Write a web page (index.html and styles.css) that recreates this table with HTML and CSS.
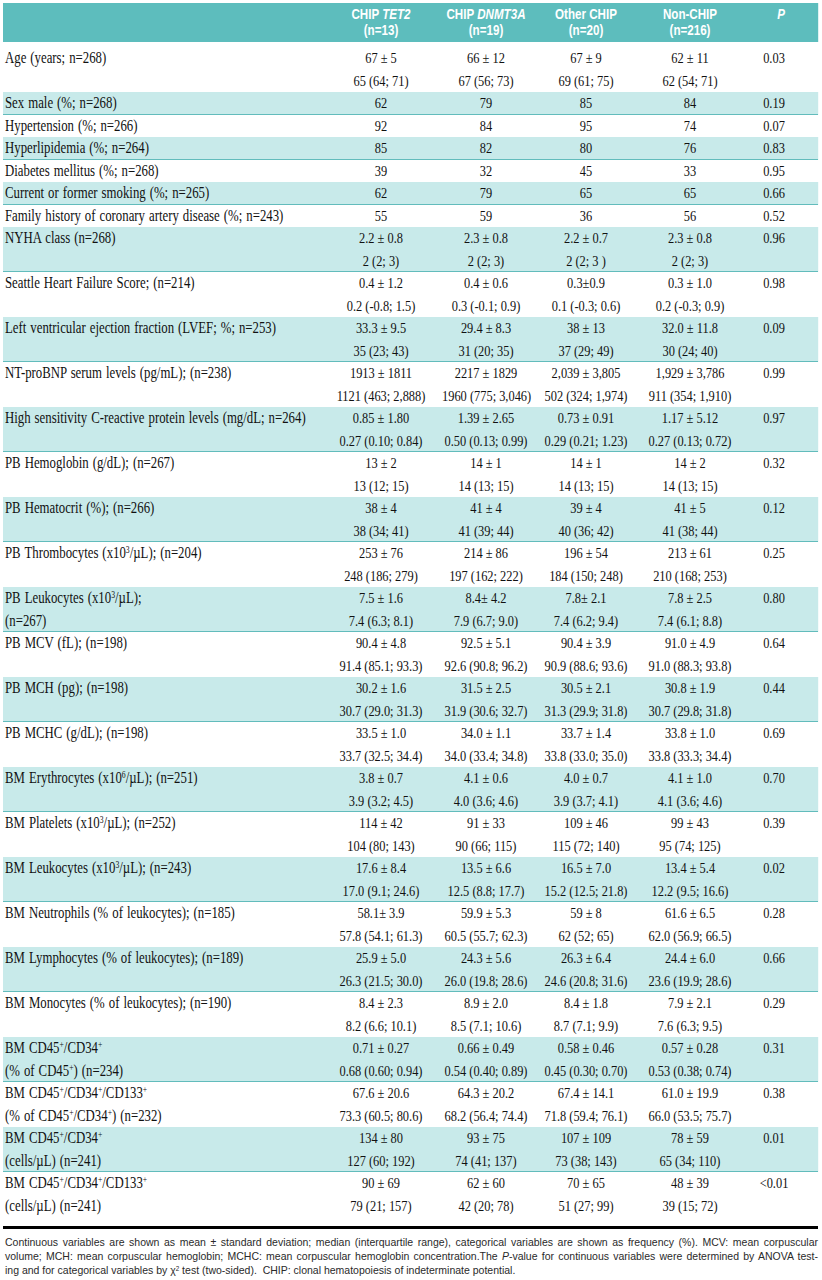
FILE: index.html
```html
<!DOCTYPE html>
<html lang="en">
<head>
<meta charset="utf-8">
<title>Patient characteristics by CHIP status</title>
<link rel="stylesheet" href="styles.css">
</head>
<body>
<div class="page">
  <div class="table">
    <div class="thead">
      <div class="h-label"></div>
      <div class="h">CHIP <i>TET2</i><br>(n=13)</div>
      <div class="h">CHIP <i>DNMT3A</i><br>(n=19)</div>
      <div class="h">Other CHIP<br>(n=20)</div>
      <div class="h">Non-CHIP<br>(n=216)</div>
      <div class="h h-p"><i>P</i></div>
    </div>
    <div class="tbody">
      <div class="row"><div class="lbl">Age (years; n=268)</div><div class="v">67 ± 5<br>65 (64; 71)</div><div class="v">66 ± 12<br>67 (56; 73)</div><div class="v">67 ± 9<br>69 (61; 75)</div><div class="v">62 ± 11<br>62 (54; 71)</div><div class="v p">0.03</div></div>
      <div class="row"><div class="lbl">Sex male (%; n=268)</div><div class="v">62</div><div class="v">79</div><div class="v">85</div><div class="v">84</div><div class="v p">0.19</div></div>
      <div class="row"><div class="lbl">Hypertension (%; n=266)</div><div class="v">92</div><div class="v">84</div><div class="v">95</div><div class="v">74</div><div class="v p">0.07</div></div>
      <div class="row"><div class="lbl">Hyperlipidemia (%; n=264)</div><div class="v">85</div><div class="v">82</div><div class="v">80</div><div class="v">76</div><div class="v p">0.83</div></div>
      <div class="row"><div class="lbl">Diabetes mellitus (%; n=268)</div><div class="v">39</div><div class="v">32</div><div class="v">45</div><div class="v">33</div><div class="v p">0.95</div></div>
      <div class="row"><div class="lbl">Current or former smoking (%; n=265)</div><div class="v">62</div><div class="v">79</div><div class="v">65</div><div class="v">65</div><div class="v p">0.66</div></div>
      <div class="row"><div class="lbl">Family history of coronary artery disease (%; n=243)</div><div class="v">55</div><div class="v">59</div><div class="v">36</div><div class="v">56</div><div class="v p">0.52</div></div>
      <div class="row"><div class="lbl">NYHA class (n=268)</div><div class="v">2.2 ± 0.8<br>2 (2; 3)</div><div class="v">2.3 ± 0.8<br>2 (2; 3)</div><div class="v">2.2 ± 0.7<br>2 (2; 3 )</div><div class="v">2.3 ± 0.8<br>2 (2; 3)</div><div class="v p">0.96</div></div>
      <div class="row"><div class="lbl">Seattle Heart Failure Score; (n=214)</div><div class="v">0.4 ± 1.2<br>0.2 (-0.8; 1.5)</div><div class="v">0.4 ± 0.6<br>0.3 (-0.1; 0.9)</div><div class="v">0.3±0.9<br>0.1 (-0.3; 0.6)</div><div class="v">0.3 ± 1.0<br>0.2 (-0.3; 0.9)</div><div class="v p">0.98</div></div>
      <div class="row"><div class="lbl">Left ventricular ejection fraction (LVEF; %; n=253)</div><div class="v">33.3 ± 9.5<br>35 (23; 43)</div><div class="v">29.4 ± 8.3<br>31 (20; 35)</div><div class="v">38 ± 13<br>37 (29; 49)</div><div class="v">32.0 ± 11.8<br>30 (24; 40)</div><div class="v p">0.09</div></div>
      <div class="row"><div class="lbl">NT-proBNP serum levels (pg/mL); (n=238)</div><div class="v">1913 ± 1811<br>1121 (463; 2,888)</div><div class="v">2217 ± 1829<br>1960 (775; 3,046)</div><div class="v">2,039 ± 3,805<br>502 (324; 1,974)</div><div class="v">1,929 ± 3,786<br>911 (354; 1,910)</div><div class="v p">0.99</div></div>
      <div class="row"><div class="lbl">High sensitivity C-reactive protein levels (mg/dL; n=264)</div><div class="v">0.85 ± 1.80<br>0.27 (0.10; 0.84)</div><div class="v">1.39 ± 2.65<br>0.50 (0.13; 0.99)</div><div class="v">0.73 ± 0.91<br>0.29 (0.21; 1.23)</div><div class="v">1.17 ± 5.12<br>0.27 (0.13; 0.72)</div><div class="v p">0.97</div></div>
      <div class="row"><div class="lbl">PB Hemoglobin (g/dL); (n=267)</div><div class="v">13 ± 2<br>13 (12; 15)</div><div class="v">14 ± 1<br>14 (13; 15)</div><div class="v">14 ± 1<br>14 (13; 15)</div><div class="v">14 ± 2<br>14 (13; 15)</div><div class="v p">0.32</div></div>
      <div class="row"><div class="lbl">PB Hematocrit (%); (n=266)</div><div class="v">38 ± 4<br>38 (34; 41)</div><div class="v">41 ± 4<br>41 (39; 44)</div><div class="v">39 ± 4<br>40 (36; 42)</div><div class="v">41 ± 5<br>41 (38; 44)</div><div class="v p">0.12</div></div>
      <div class="row"><div class="lbl">PB Thrombocytes (x10<sup>3</sup>/µL); (n=204)</div><div class="v">253 ± 76<br>248 (186; 279)</div><div class="v">214 ± 86<br>197 (162; 222)</div><div class="v">196 ± 54<br>184 (150; 248)</div><div class="v">213 ± 61<br>210 (168; 253)</div><div class="v p">0.25</div></div>
      <div class="row"><div class="lbl">PB Leukocytes (x10<sup>3</sup>/µL);<br>(n=267)</div><div class="v">7.5 ± 1.6<br>7.4 (6.3; 8.1)</div><div class="v">8.4± 4.2<br>7.9 (6.7; 9.0)</div><div class="v">7.8± 2.1<br>7.4 (6.2; 9.4)</div><div class="v">7.8 ± 2.5<br>7.4 (6.1; 8.8)</div><div class="v p">0.80</div></div>
      <div class="row"><div class="lbl">PB MCV (fL); (n=198)</div><div class="v">90.4 ± 4.8<br>91.4 (85.1; 93.3)</div><div class="v">92.5 ± 5.1<br>92.6 (90.8; 96.2)</div><div class="v">90.4 ± 3.9<br>90.9 (88.6; 93.6)</div><div class="v">91.0 ± 4.9<br>91.0 (88.3; 93.8)</div><div class="v p">0.64</div></div>
      <div class="row"><div class="lbl">PB MCH (pg); (n=198)</div><div class="v">30.2 ± 1.6<br>30.7 (29.0; 31.3)</div><div class="v">31.5 ± 2.5<br>31.9 (30.6; 32.7)</div><div class="v">30.5 ± 2.1<br>31.3 (29.9; 31.8)</div><div class="v">30.8 ± 1.9<br>30.7 (29.8; 31.8)</div><div class="v p">0.44</div></div>
      <div class="row"><div class="lbl">PB MCHC (g/dL); (n=198)</div><div class="v">33.5 ± 1.0<br>33.7 (32.5; 34.4)</div><div class="v">34.0 ± 1.1<br>34.0 (33.4; 34.8)</div><div class="v">33.7 ± 1.4<br>33.8 (33.0; 35.0)</div><div class="v">33.8 ± 1.0<br>33.8 (33.3; 34.4)</div><div class="v p">0.69</div></div>
      <div class="row"><div class="lbl">BM Erythrocytes (x10<sup>6</sup>/µL); (n=251)</div><div class="v">3.8 ± 0.7<br>3.9 (3.2; 4.5)</div><div class="v">4.1 ± 0.6<br>4.0 (3.6; 4.6)</div><div class="v">4.0 ± 0.7<br>3.9 (3.7; 4.1)</div><div class="v">4.1 ± 1.0<br>4.1 (3.6; 4.6)</div><div class="v p">0.70</div></div>
      <div class="row"><div class="lbl">BM Platelets (x10<sup>3</sup>/µL); (n=252)</div><div class="v">114 ± 42<br>104 (80; 143)</div><div class="v">91 ± 33<br>90 (66; 115)</div><div class="v">109 ± 46<br>115 (72; 140)</div><div class="v">99 ± 43<br>95 (74; 125)</div><div class="v p">0.39</div></div>
      <div class="row"><div class="lbl">BM Leukocytes (x10<sup>3</sup>/µL); (n=243)</div><div class="v">17.6 ± 8.4<br>17.0 (9.1; 24.6)</div><div class="v">13.5 ± 6.6<br>12.5 (8.8; 17.7)</div><div class="v">16.5 ± 7.0<br>15.2 (12.5; 21.8)</div><div class="v">13.4 ± 5.4<br>12.2 (9.5; 16.6)</div><div class="v p">0.02</div></div>
      <div class="row"><div class="lbl">BM Neutrophils (% of leukocytes); (n=185)</div><div class="v">58.1± 3.9<br>57.8 (54.1; 61.3)</div><div class="v">59.9 ± 5.3<br>60.5 (55.7; 62.3)</div><div class="v">59 ± 8<br>62 (52; 65)</div><div class="v">61.6 ± 6.5<br>62.0 (56.9; 66.5)</div><div class="v p">0.28</div></div>
      <div class="row"><div class="lbl">BM Lymphocytes (% of leukocytes); (n=189)</div><div class="v">25.9 ± 5.0<br>26.3 (21.5; 30.0)</div><div class="v">24.3 ± 5.6<br>26.0 (19.8; 28.6)</div><div class="v">26.3 ± 6.4<br>24.6 (20.8; 31.6)</div><div class="v">24.4 ± 6.0<br>23.6 (19.9; 28.6)</div><div class="v p">0.66</div></div>
      <div class="row"><div class="lbl">BM Monocytes (% of leukocytes); (n=190)</div><div class="v">8.4 ± 2.3<br>8.2 (6.6; 10.1)</div><div class="v">8.9 ± 2.0<br>8.5 (7.1; 10.6)</div><div class="v">8.4 ± 1.8<br>8.7 (7.1; 9.9)</div><div class="v">7.9 ± 2.1<br>7.6 (6.3; 9.5)</div><div class="v p">0.29</div></div>
      <div class="row"><div class="lbl">BM CD45<sup>+</sup>/CD34<sup>+</sup><br>(% of CD45<sup>+</sup>) (n=234)</div><div class="v">0.71 ± 0.27<br>0.68 (0.60; 0.94)</div><div class="v">0.66 ± 0.49<br>0.54 (0.40; 0.89)</div><div class="v">0.58 ± 0.46<br>0.45 (0.30; 0.70)</div><div class="v">0.57 ± 0.28<br>0.53 (0.38; 0.74)</div><div class="v p">0.31</div></div>
      <div class="row"><div class="lbl">BM CD45<sup>+</sup>/CD34<sup>+</sup>/CD133<sup>+</sup><br>(% of CD45<sup>+</sup>/CD34<sup>+</sup>) (n=232)</div><div class="v">67.6 ± 20.6<br>73.3 (60.5; 80.6)</div><div class="v">64.3 ± 20.2<br>68.2 (56.4; 74.4)</div><div class="v">67.4 ± 14.1<br>71.8 (59.4; 76.1)</div><div class="v">61.0 ± 19.9<br>66.0 (53.5; 75.7)</div><div class="v p">0.38</div></div>
      <div class="row"><div class="lbl">BM CD45<sup>+</sup>/CD34<sup>+</sup><br>(cells/µL) (n=241)</div><div class="v">134 ± 80<br>127 (60; 192)</div><div class="v">93 ± 75<br>74 (41; 137)</div><div class="v">107 ± 109<br>73 (38; 143)</div><div class="v">78 ± 59<br>65 (34; 110)</div><div class="v p">0.01</div></div>
      <div class="row"><div class="lbl">BM CD45<sup>+</sup>/CD34<sup>+</sup>/CD133<sup>+</sup><br>(cells/µL) (n=241)</div><div class="v">90 ± 69<br>79 (21; 157)</div><div class="v">62 ± 60<br>42 (20; 78)</div><div class="v">70 ± 65<br>51 (27; 99)</div><div class="v">48 ± 39<br>39 (15; 72)</div><div class="v p">&lt;0.01</div></div>
    </div>
  </div>
  <div class="rule"></div>
  <div class="footnote">
    <span class="fn-line">Continuous variables are shown as mean ± standard deviation; median (interquartile range), categorical variables are shown as frequency (%). MCV: mean corpuscular</span>
    <span class="fn-line">volume; MCH: mean corpuscular hemoglobin; MCHC: mean corpuscular hemoglobin concentration.The <i>P</i>-value for continuous variables were determined by ANOVA test-</span>
    <span class="fn-line fn-last">ing and for categorical variables by χ<sup>2</sup> test (two-sided).&nbsp; CHIP: clonal hematopoiesis of indeterminate potential.</span>
  </div>
</div>
</body>
</html>
```

FILE: styles.css
```css
html, body {
  margin: 0;
  padding: 0;
  background: #ffffff;
}

.page {
  width: 815px;
  padding: 3px 4px 0 3px;
}

/* The typeset table uses a condensed face; the table is laid out at
   1/0.8 of its width and condensed horizontally as a whole. */
.table {
  width: 1018.75px;
  transform: scaleX(0.8);
  transform-origin: left top;
}

.thead,
.row {
  display: grid;
  grid-template-columns: 396.25px 152.5px 110px 140px 120px 100px;
}

.thead {
  background: #5dbdbd;
  color: #ffffff;
  font-family: "Liberation Sans", Arial, sans-serif;
  font-weight: bold;
  font-size: 14.5px;
  line-height: 16px;
  padding: 3px 0 4px;
}

.h {
  text-align: center;
  white-space: nowrap;
}

.h-p {
  padding-left: 8px;
}

.tbody {
  font-family: "Liberation Serif", "Times New Roman", serif;
  font-size: 15.5px;
  line-height: 22.5px;
  color: #111111;
}

.row:first-child {
  padding-top: 5px;
}

.row:nth-child(even) {
  background: #c8eaea;
  box-shadow: inset 0 -1px 0 #62bcbc;
}

.lbl {
  padding-left: 2.5px;
  font-size: 16px;
  word-spacing: 1px;
  white-space: nowrap;
}

.v {
  text-align: center;
  white-space: nowrap;
}

.p {
  padding-right: 10px;
}

sup {
  font-size: 0.6em;
  line-height: 0;
  vertical-align: 0.55em;
}

.rule {
  margin-top: 9px;
  height: 3px;
  background: #000000;
}

.footnote {
  margin-top: 6px;
  padding-left: 2px;
  font-family: "Liberation Sans", Arial, sans-serif;
  font-size: 10.5px;
  line-height: 14px;
  color: #2a2a2a;
}

.fn-line {
  display: block;
  text-align: justify;
  text-align-last: justify;
  white-space: nowrap;
}

.fn-last {
  text-align-last: auto;
}
```
